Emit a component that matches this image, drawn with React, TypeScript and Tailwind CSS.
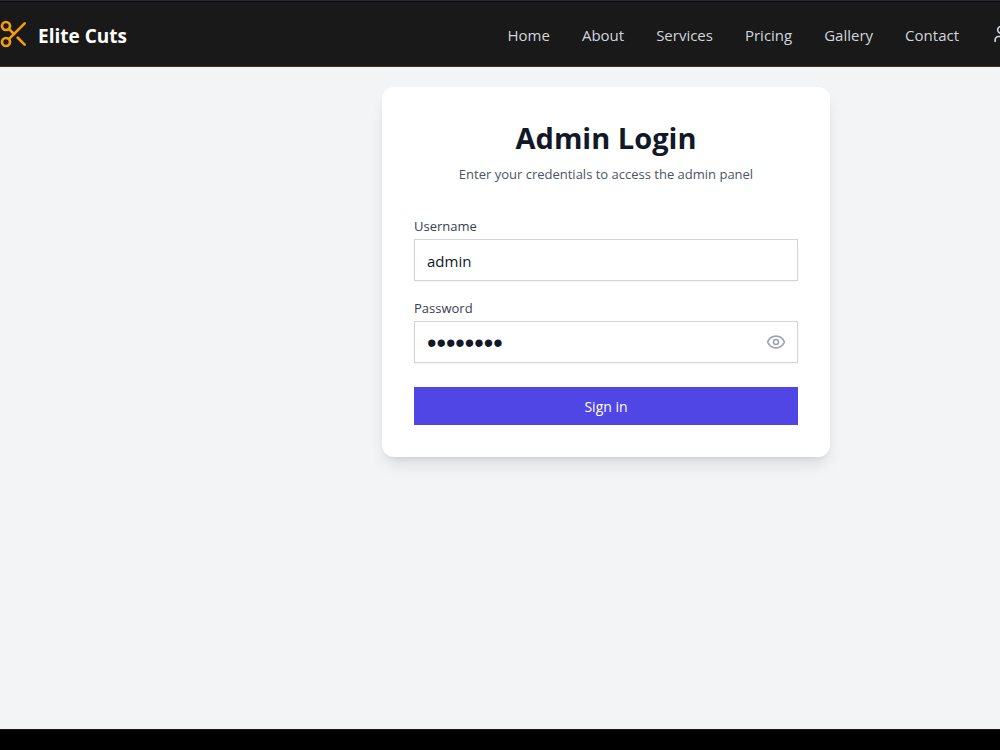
import React, { useState } from "react";
import clsx from "clsx";
import { Eye, EyeOff, Scissors, User } from "lucide-react";

const links = ["Home", "About", "Services", "Pricing", "Gallery", "Contact"];

function Navbar() {
  return (
    <header className="border-t border-[#2c2c34] border-b border-b-[#4a3010] bg-[#191919] h-[67px] shrink-0">
      <div className="flex h-full items-center justify-between border-t border-[#08080c] -ml-0.5 -mr-[11px]">
        <a href="#home" className="flex items-center gap-2">
          <Scissors className="h-8 w-8 text-[#f59e0b]" />
          <span className="pt-1 text-[19px] leading-7 font-bold text-white">
            Elite Cuts
          </span>
        </a>
        <nav className="flex items-center gap-8">
          {links.map((link) => (
            <a
              key={link}
              href={`#${link.toLowerCase()}`}
              className="pt-0.5 text-[15px] leading-6 text-[#d1d5db]"
            >
              {link}
            </a>
          ))}
          <a href="#account" aria-label="Account" className="text-[#d1d5db]">
            <User className="h-5 w-5" />
          </a>
        </nav>
      </div>
    </header>
  );
}

function LoginForm() {
  const [username, setUsername] = useState("admin");
  const [password, setPassword] = useState("admin123");
  const [showPassword, setShowPassword] = useState(false);

  const handleSubmit = (e: React.FormEvent) => {
    e.preventDefault();
  };

  return (
    <div className="w-full max-w-md rounded-xl bg-white p-8 shadow-lg">
      <div className="text-center">
        <h1 className="text-[29px] leading-[38px] font-bold text-[#111827]">
          Admin Login
        </h1>
        <p className="mt-1.5 text-[13px] leading-[22px] text-[#4b5563]">
          Enter your credentials to access the admin panel
        </p>
      </div>

      <form onSubmit={handleSubmit} className="mt-[30px]">
        <label
          htmlFor="username"
          className="block text-[13px] leading-[22px] text-[#374151]"
        >
          Username
        </label>
        <input
          id="username"
          type="text"
          value={username}
          onChange={(e) => setUsername(e.target.value)}
          className="mt-0.5 block h-[42px] w-full border border-[#d1d5db] bg-white px-3 pt-0.5 text-[15px] text-[#111827] shadow-xs outline-none"
        />

        <label
          htmlFor="password"
          className="mt-4 block text-[13px] leading-[22px] text-[#374151]"
        >
          Password
        </label>
        <div className="relative mt-0.5">
          <input
            id="password"
            type={showPassword ? "text" : "password"}
            value={password}
            onChange={(e) => setPassword(e.target.value)}
            className={clsx(
              "block h-[42px] w-full border border-[#d1d5db] bg-white pt-0.5 pl-3 pr-10 text-[#111827] shadow-xs outline-none",
              // the masked dots need a larger size than the typed text
              showPassword
                ? "text-[15px]"
                : "font-['Liberation_Sans',sans-serif] text-[27px]"
            )}
          />
          <button
            type="button"
            aria-label="Toggle password visibility"
            onClick={() => setShowPassword(!showPassword)}
            className="absolute inset-y-0 right-0 flex items-center pr-3 text-[#9ca3af]"
          >
            {showPassword ? (
              <EyeOff className="h-5 w-5" />
            ) : (
              <Eye className="h-5 w-5" />
            )}
          </button>
        </div>

        <button
          type="submit"
          className="mt-6 h-[38px] w-full bg-[#4f46e5] pt-0.5 text-[14px] leading-5 text-white"
        >
          Sign in
        </button>
      </form>
    </div>
  );
}

function App() {
  return (
    <div className="flex min-h-screen flex-col overflow-hidden bg-[#f3f4f6] font-['Open_Sans','Noto_Sans',sans-serif]">
      <Navbar />
      <main className="flex flex-1 items-start justify-center pt-5 pl-[212px]">
        <LoginForm />
      </main>
      <footer className="h-[21px] border-t border-[#1c1c0a] bg-black" />
    </div>
  );
}

export default App;
